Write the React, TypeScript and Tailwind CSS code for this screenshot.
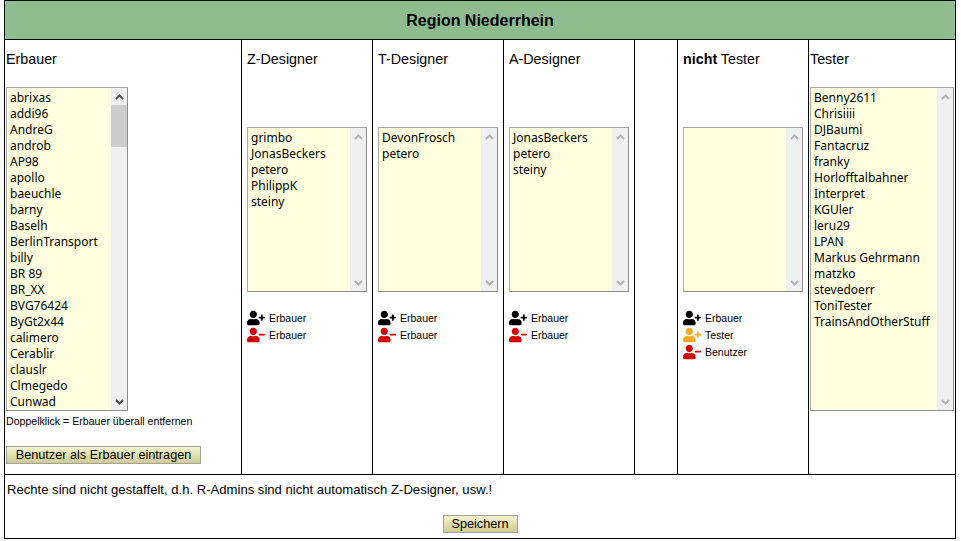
import React from "react";
import { FaUserPlus, FaUserMinus } from "react-icons/fa";

const erbauer = ["abrixas","addi96","AndreG","androb","AP98","apollo","baeuchle","barny","Baselh","BerlinTransport","billy","BR 89","BR_XX","BVG76424","ByGt2x44","calimero","Cerablir","clauslr","Clmegedo","Cunwad"];
const tester = ["Benny2611","Chrisiiii","DJBaumi","Fantacruz","franky","Horlofftalbahner","Interpret","KGUler","leru29","LPAN","Markus Gehrmann","matzko","stevedoerr","ToniTester","TrainsAndOtherStuff"];

function Arrow({ up, dark }: { up: boolean; dark: boolean }) {
  return (
    <div className="flex h-[17px] w-[16px] items-center justify-center">
      <svg width="9" height="6" viewBox="0 0 9 6" fill="none" stroke={dark ? "#505050" : "#b4b4b4"} strokeWidth="2">
        <path d={up ? "M1 5 L4.5 1.5 L8 5" : "M1 1 L4.5 4.5 L8 1"} />
      </svg>
    </div>
  );
}

function ListBox({ items, width, height, active }: { items: string[]; width: string; height: string; active?: boolean }) {
  return (
    <div className={`flex border border-t-[#a9a9a9] border-l-[#a9a9a9] border-r-[#8c8c8c] border-b-[#8c8c8c] bg-[#ffffe0] ${width} ${height}`}>
      <div className="min-w-0 flex-1 overflow-hidden pl-[3px] pt-[2px] font-['Noto_Sans','DejaVu_Sans',sans-serif] text-[12px] leading-[16px] text-black">
        {items.map((n) => (
          <div key={n} className="h-[16px] whitespace-nowrap">{n}</div>
        ))}
      </div>
      <div className="flex w-[16px] flex-col justify-between bg-[#f0f0f0]">
        <div className="flex flex-col">
          <Arrow up dark={!!active} />
          {active && <div className="h-[42px] w-[16px] bg-[#cdcdcd]" />}
        </div>
        <Arrow up={false} dark={!!active} />
      </div>
    </div>
  );
}

function Action({ kind, color, label }: { kind: "plus" | "minus"; color: string; label: string }) {
  const Icon = kind === "plus" ? FaUserPlus : FaUserMinus;
  return (
    <div className="flex h-[17px] items-center">
      <Icon size={18} color={color} />
      <span className="ml-[4px] mt-[2px] text-[10.5px] text-black">{label}</span>
    </div>
  );
}

function Column({ title, items, width, children }: { title: React.ReactNode; items: string[]; width: string; children: React.ReactNode }) {
  return (
    <div className={`border-r border-black pl-[5px] ${width}`}>
      <div className="h-[87px] pt-[11px] text-[14.3px] leading-[16px]">{title}</div>
      <ListBox items={items} width="w-[120px]" height="h-[165px]" />
      <div className="mt-[17px] flex flex-col">{children}</div>
    </div>
  );
}

const btn = "border border-[#a0a0a0] bg-gradient-to-b from-[#f5f3cf] to-[#cfcb93] text-[12.7px] leading-[16px]";

export default function App() {
  return (
    <div className="ml-[4px] h-[539px] w-[952px] border border-black font-['Liberation_Sans',Arial,sans-serif] text-black">
      <div className="flex h-[39px] items-center justify-center border-b border-black bg-[#8fbc8f] pt-[1px] text-[16px] font-bold">
        Region Niederrhein
      </div>
      <div className="flex h-[435px] border-b border-black">
        <div className="w-[237px] border-r border-black pl-[1px]">
          <div className="h-[47px] pt-[11px] text-[14.3px] leading-[16px]">Erbauer</div>
          <ListBox items={erbauer} width="w-[122px]" height="h-[324px]" active />
          <div className="mt-[4px] text-[10.6px] leading-[12px]">Doppelklick = Erbauer überall entfernen</div>
          <button className={`mt-[19px] h-[18px] w-[195px] ${btn}`}>
            Benutzer als Erbauer eintragen
          </button>
        </div>
        <Column title="Z-Designer" width="w-[131px]" items={["grimbo","JonasBeckers","petero","PhilippK","steiny"]}>
          <Action kind="plus" color="#000" label="Erbauer" />
          <Action kind="minus" color="#d40000" label="Erbauer" />
        </Column>
        <Column title="T-Designer" width="w-[131px]" items={["DevonFrosch","petero"]}>
          <Action kind="plus" color="#000" label="Erbauer" />
          <Action kind="minus" color="#d40000" label="Erbauer" />
        </Column>
        <Column title="A-Designer" width="w-[131px]" items={["JonasBeckers","petero","steiny"]}>
          <Action kind="plus" color="#000" label="Erbauer" />
          <Action kind="minus" color="#d40000" label="Erbauer" />
        </Column>
        <div className="w-[43px] border-r border-black" />
        <Column title={<span><b>nicht</b> Tester</span>} width="w-[131px]" items={[]}>
          <Action kind="plus" color="#000" label="Erbauer" />
          <Action kind="plus" color="#f9a825" label="Tester" />
          <Action kind="minus" color="#d40000" label="Benutzer" />
        </Column>
        <div className="flex-1 pl-[1px]">
          <div className="h-[47px] pt-[11px] text-[14.3px] leading-[16px]">Tester</div>
          <ListBox items={tester} width="w-[144px]" height="h-[324px]" />
        </div>
      </div>
      <div className="h-[63px] pl-[2px] pt-[7px]">
        <div className="text-[13.1px] leading-[16px]">Rechte sind nicht gestaffelt, d.h. R-Admins sind nicht automatisch Z-Designer, usw.!</div>
        <div className="mt-[17px] flex justify-center pr-[2px]">
          <button className={`h-[18px] w-[75px] ${btn}`}>
            Speichern
          </button>
        </div>
      </div>
    </div>
  );
}
